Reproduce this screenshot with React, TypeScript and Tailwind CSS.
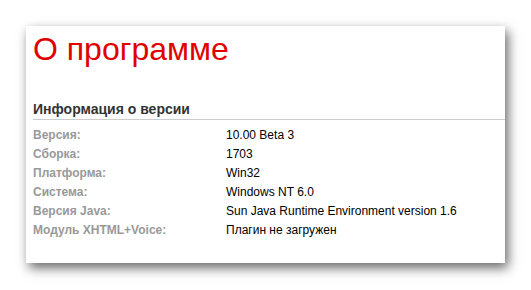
import React from 'react';

const rows: [string, string][] = [
  ['Версия:', '10.00 Beta 3'],
  ['Сборка:', '1703'],
  ['Платформа:', 'Win32'],
  ['Система:', 'Windows NT 6.0'],
  ['Версия Java:', 'Sun Java Runtime Environment version 1.6'],
  ['Модуль XHTML+Voice:', 'Плагин не загружен'],
];

export default function App() {
  return (
    <div className="w-[531px] h-[290px] bg-white pt-[26px] pl-[26px] font-['Liberation_Sans',Arial,sans-serif]">
      <div className="w-[479px] h-[237px] bg-white pl-[7px] pt-[7px] shadow-[3px_5px_11px_rgba(0,0,0,0.6)]">
        <h1 className="text-[32px] leading-none text-[#e00000]">О программе</h1>
        <div className="mt-[36px] border-b border-[#cccccc] pb-[2px]">
          <h2 className="text-[14px] leading-[16px] font-bold text-[#333333]">Информация о версии</h2>
        </div>
        <div className="mt-[6px]">
          {rows.map(([label, value]) => (
            <div key={label} className="flex h-[19px] items-center text-[12px] leading-[19px]">
              <span className="w-[193px] font-bold text-[#999999]">{label}</span>
              <span className="text-black">{value}</span>
            </div>
          ))}
        </div>
      </div>
    </div>
  );
}
